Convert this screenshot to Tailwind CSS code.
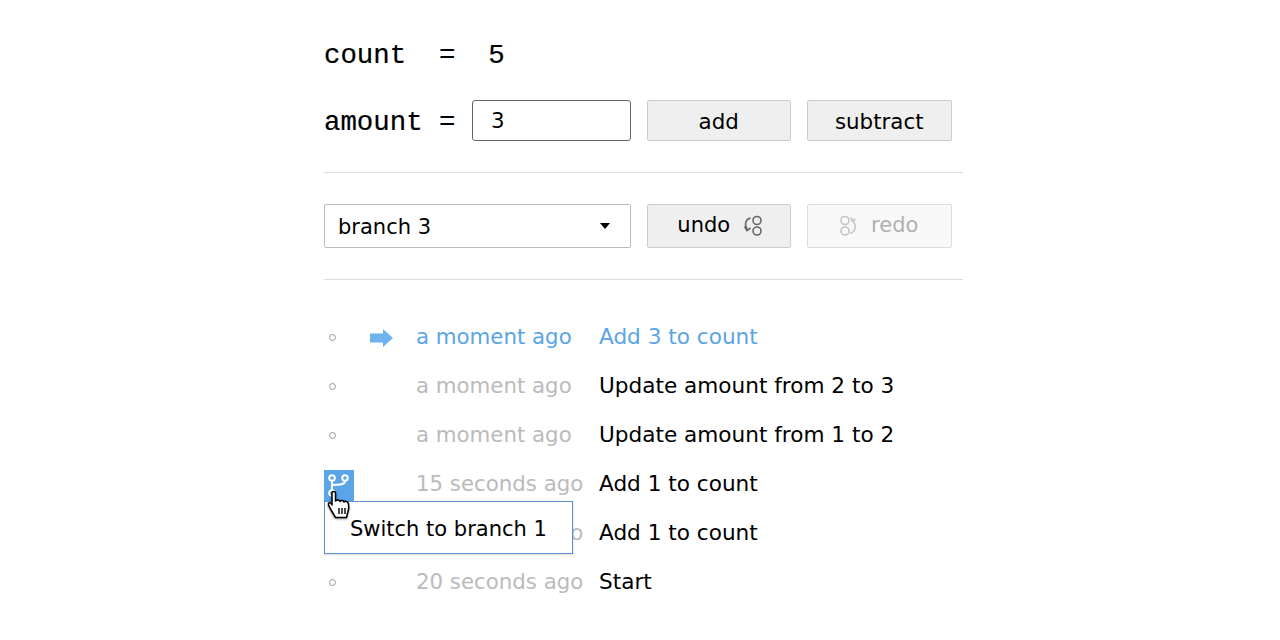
<!DOCTYPE html>
<html><head><script src="https://cdn.jsdelivr.net/npm/@tailwindcss/browser@4"></script></head>
<body class="bg-white text-black font-['Open_Sans',sans-serif]">
<div class="w-[639px] ml-[324px] h-[640px] overflow-hidden">
<div class="pt-[38px] h-[100px] font-['Liberation_Mono',monospace] text-[27.4px] leading-[36px] whitespace-pre [-webkit-text-stroke:0.2px_black]">count  =  5</div>
<div class="flex items-center h-[41px] gap-4 font-['DejaVu_Sans',sans-serif] text-[21.4px]">
<div class="w-[132px] pt-[5px] font-['Liberation_Mono',monospace] text-[27.4px] whitespace-pre [-webkit-text-stroke:0.2px_black]">amount =</div>
<div class="w-[158.5px] h-[41px] border border-[#666] rounded-[3px] pl-[18px] pt-[1px] flex items-center">3</div>
<div class="w-[144.5px] h-[41px] border border-[#ccc] bg-[#efefef] rounded-[2px] pt-[3px] flex items-center justify-center">add</div>
<div class="w-[144.5px] h-[41px] border border-[#ccc] bg-[#efefef] rounded-[2px] pt-[3px] flex items-center justify-center">subtract</div>
</div>
<div class="h-px bg-[#ddd] mt-[31px]"></div>
<div class="flex items-center h-[44px] mt-[31px] gap-4 font-['DejaVu_Sans',sans-serif] text-[21px]">
<div class="w-[306.5px] h-[44px] border border-[#bbb] rounded-[2px] pl-[13px] pr-[20px] flex items-center justify-between"><span class="mt-[3px]">branch 3</span><span class="w-0 h-0 border-x-[5.5px] border-x-transparent border-t-[6px] border-t-black"></span></div>
<div class="w-[144.5px] h-[44px] border border-[#ccc] bg-[#efefef] rounded-[2px] flex items-center justify-center gap-[14px] pl-[2px]"><span>undo</span>
<svg width="18" height="22" viewBox="0 0 18 22" fill="none" stroke="#666" stroke-width="1.6"><circle cx="13" cy="5.5" r="4"/><circle cx="13" cy="16" r="4"/><path d="M6.5 3C2 4 0 9 3 14"/><path d="M0.500 11.500l2.500 4 3.500-2.500"/></svg></div>
<div class="w-[144.5px] h-[44px] border border-[#ddd] bg-[#f9f9f9] rounded-[2px] flex items-center justify-center gap-[13px] text-[#b0b0b0]">
<svg width="18" height="22" viewBox="0 0 18 22" fill="none" stroke="#c4c4c4" stroke-width="1.6"><circle cx="5" cy="5.5" r="4"/><circle cx="5" cy="16" r="4"/><path d="M10 18.500C16 17 17 9 12 5.500"/><path d="M11 2l1 3.500 3.500-1"/></svg><span>redo</span></div>
</div>
<div class="h-px bg-[#ddd] mt-[31px]"></div>
<div class="relative mt-[33px] font-['DejaVu_Sans',sans-serif] text-[21.4px]">
<div class="flex items-center h-[49px] text-[#5aa5e8]"><span class="w-[46px] pl-[5px]"><span class="block w-[7px] h-[7px] rounded-full border border-[#999]"></span></span><span class="w-[46px]"><svg width="24" height="18" viewBox="0 0 24 18" fill="#6fb2f0"><path d="M0 4.500h13V0l10 9-10 9v-4.500H0z"/></svg></span><span class="w-[183px] -mt-[1px] text-[21.3px]">a moment ago</span><span class="-mt-[1px] text-[21.6px]">Add 3 to count</span></div>
<div class="flex items-center h-[49px]"><span class="w-[92px] pl-[5px]"><span class="block w-[7px] h-[7px] rounded-full border border-[#999]"></span></span><span class="w-[183px] text-[#bbb] -mt-[1px] text-[21.3px]">a moment ago</span><span class="-mt-[1px] text-[21.6px]">Update amount from 2 to 3</span></div>
<div class="flex items-center h-[49px]"><span class="w-[92px] pl-[5px]"><span class="block w-[7px] h-[7px] rounded-full border border-[#999]"></span></span><span class="w-[183px] text-[#bbb] -mt-[1px] text-[21.3px]">a moment ago</span><span class="-mt-[1px] text-[21.6px]">Update amount from 1 to 2</span></div>
<div class="flex items-center h-[49px]"><span class="w-[92px]"></span><span class="w-[183px] text-[#bbb] -mt-[1px] text-[21.3px]">15 seconds ago</span><span class="-mt-[1px] text-[21.6px]">Add 1 to count</span></div>
<div class="flex items-center h-[49px]"><span class="w-[92px]"></span><span class="w-[183px] text-[#bbb] -mt-[1px] text-[21.3px]">16 seconds ago</span><span class="-mt-[1px] text-[21.6px]">Add 1 to count</span></div>
<div class="flex items-center h-[49px]"><span class="w-[92px] pl-[5px]"><span class="block w-[7px] h-[7px] rounded-full border border-[#999]"></span></span><span class="w-[183px] text-[#bbb] -mt-[1px] text-[21.3px]">20 seconds ago</span><span class="-mt-[1px] text-[21.6px]">Start</span></div>
<div class="absolute left-0 top-[157px] w-[30px] h-[31px] bg-[#5aa5e8]"><svg width="30" height="31" viewBox="0 0 30 31" fill="none" stroke="#fff" stroke-width="2"><circle cx="8" cy="8" r="2.800"/><circle cx="21" cy="8" r="2.800"/><circle cx="8" cy="23" r="2.800"/><path d="M8 11v9M21 11c0 3-3 4-13 4"/></svg></div>
<div class="absolute left-0 top-[188px] w-[249px] h-[53px] bg-white border border-[#5a8fd0] shadow-[0_1px_2px_rgba(0,0,0,0.15)] flex items-center pl-[25px] pt-[4px] text-[21px]">Switch to branch 1</div>
<svg class="absolute left-[3px] top-[177px] drop-shadow-[0_1px_1px_rgba(0,0,0,0.4)]" width="26" height="30" viewBox="0 0 26 30"><path d="M5 3C5 1 8.500 1 8.500 3v8c1-1.500 4-1.500 4.500.5.800-1.500 3.500-1.500 4 .5.800-1 3.800-1 4.300 1.500.7 3 .5 6-.5 8.500l-1.300 5.500H8.500l-5-8.500C2.500 17 1 15 1.500 13.500c1-1.500 2.500-.5 3.500 1.500z" fill="#fff" stroke="#000" stroke-width="1.500" stroke-linejoin="round"/><path d="M12 18v6M15 18v6M18 18v6" stroke="#000" stroke-width="1.400"/></svg>
</div>
</div>
</body></html>
